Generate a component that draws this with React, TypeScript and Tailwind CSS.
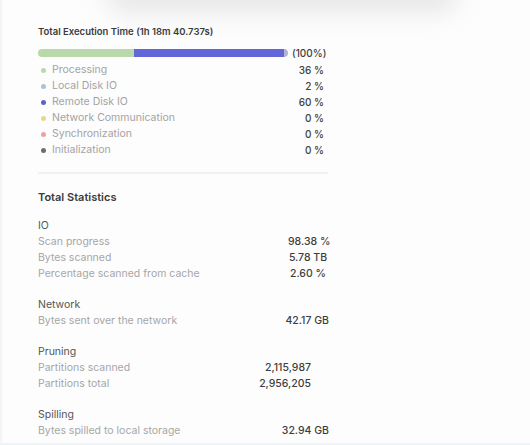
const legend = [
  { label: "Processing", value: "36 %", color: "bg-[#b9d9aa]" },
  { label: "Local Disk IO", value: "2 %", color: "bg-[#a8c6cf]" },
  { label: "Remote Disk IO", value: "60 %", color: "bg-[#5e62cc]" },
  { label: "Network Communication", value: "0 %", color: "bg-[#e8d68e]" },
  { label: "Synchronization", value: "0 %", color: "bg-[#eaa0a4]" },
  { label: "Initialization", value: "0 %", color: "bg-[#6e6e6e]" },
];

const sections = [
  {
    title: "IO",
    cols: "grid-cols-[250px_40px]",
    align: "text-center",
    rows: [
      ["Scan progress", "98.38 %"],
      ["Bytes scanned", "5.78 TB"],
      ["Percentage scanned from cache", "2.60 %"],
    ],
  },
  {
    title: "Network",
    cols: "grid-cols-[243px_48px]",
    align: "text-right",
    rows: [["Bytes sent over the network", "42.17 GB"]],
  },
  {
    title: "Pruning",
    cols: "grid-cols-[219px_54px]",
    align: "text-right",
    rows: [
      ["Partitions scanned", "2,115,987"],
      ["Partitions total", "2,956,205"],
    ],
  },
  {
    title: "Spilling",
    cols: "grid-cols-[243px_48px]",
    align: "text-right",
    rows: [["Bytes spilled to local storage", "32.94 GB"]],
  },
];

export default function App() {
  return (
    <div className="relative h-[445px] w-[530px] overflow-hidden bg-[#fdfdfd] border-l-2 border-[#f4f4f4] border-b-2 border-b-[#eef3f5] font-['Inter',sans-serif] text-[10.5px] leading-4">
      {/* blurred shadow of the popup above */}
      <div className="absolute -top-[22px] left-[105px] h-[34px] w-[350px] rounded-full bg-[#e6e6e6] blur-md" />

      <div className="relative pl-[36px] pt-[24px]">
        <h2 className="text-[9.5px] font-semibold text-[#3b3b3b]">
          Total Execution Time (1h 18m 40.737s)
        </h2>

        <div className="mt-[5px] flex items-center gap-[4px]">
          <div className="flex h-[8px] w-[250px] overflow-hidden rounded-full">
            <div className="w-[96px] bg-[#b9d9aa]" />
            <div className="w-[150px] bg-[#6266d6]" />
            <div className="w-[4px] bg-[#b2b2d6]" />
          </div>
          <span className="text-[10px] font-medium text-[#3d3d3d]">(100%)</span>
        </div>

        <div className="mt-[1px] w-[286px]">
          {legend.map((item) => (
            <div key={item.label} className="flex items-center justify-between">
              <div className="flex items-center gap-[6px] pl-[3px]">
                <span className={`h-[5px] w-[5px] rounded-full ${item.color}`} />
                <span className="text-[#a3a3a3]">{item.label}</span>
              </div>
              <span className="text-[10px] font-medium text-[#3d3d3d]">{item.value}</span>
            </div>
          ))}
        </div>

        <div className="mt-[14px] h-[2px] w-[290px] bg-[#f1f1f1]" />

        <h2 className="mt-[15px] text-[11px] font-semibold text-[#3b3b3b]">Total Statistics</h2>

        <div className="mt-[13px] flex flex-col gap-[15px]">
          {sections.map((section) => (
            <div key={section.title}>
              <div className="text-[#555555]">{section.title}</div>
              {section.rows.map(([label, value]) => (
                <div key={label} className={`grid ${section.cols}`}>
                  <span className="text-[#a6a6a6]">{label}</span>
                  <span className={`${section.align} whitespace-nowrap font-medium text-[#3d3d3d]`}>
                    {value}
                  </span>
                </div>
              ))}
            </div>
          ))}
        </div>
      </div>
    </div>
  );
}
